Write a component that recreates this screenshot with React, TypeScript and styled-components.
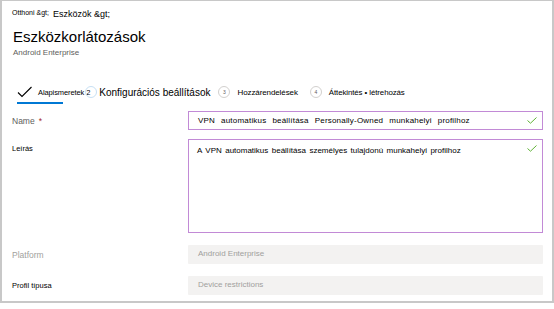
import React from 'react'
import styled, { createGlobalStyle } from 'styled-components'

const GlobalStyle = createGlobalStyle`
  body {
    margin: 0;
    background: #fff;
    font-family: "Liberation Sans", Arial, sans-serif;
    color: #000;
  }
`

const Frame = styled.div`
  box-sizing: border-box;
  width: 554px;
  height: 303px;
  border: 2px solid #c8c8c8;
  border-top-width: 1px;
  padding: 7px 0 0 10px;
`

const Breadcrumb = styled.div`
  display: flex;
  align-items: baseline;
  gap: 4px;
  height: 12px;
`

const Crumb = styled.span<{ $small?: boolean }>`
  font-size: ${(p) => (p.$small ? '7px' : '9px')};
  line-height: 1;
  position: relative;
  top: ${(p) => (p.$small ? '0' : '2px')};
`

const Title = styled.h1`
  margin: 8px 0 0 1px;
  font-size: 15px;
  font-weight: normal;
  line-height: 18px;
`

const Subtitle = styled.div`
  margin: 2px 0 0 1px;
  font-size: 8px;
  line-height: 10px;
  color: #605e5c;
`

const Stepper = styled.div`
  display: flex;
  align-items: center;
  margin: 25px 0 0 5px;
  height: 18px;
`

const Step = styled.div<{ $active?: boolean; $gap?: number }>`
  display: flex;
  align-items: center;
  height: 18px;
  position: relative;
  margin-right: ${(p) => p.$gap ?? 8}px;
  &::after {
    content: '';
    display: ${(p) => (p.$active ? 'block' : 'none')};
    position: absolute;
    left: 0;
    width: 46px;
    bottom: -3px;
    height: 2px;
    background: #0078d4;
  }
`

const StepCircle = styled.span<{ $faint?: boolean }>`
  box-sizing: border-box;
  width: 12px;
  height: 12px;
  border-radius: 50%;
  border: 1px solid ${(p) => (p.$faint ? '#c7e0f4' : '#d2d0ce')};
  font-size: 5px;
  color: #605e5c;
  display: flex;
  align-items: center;
  justify-content: center;
  margin-right: 7px;
`

const StepLabel = styled.span<{ $size?: number }>`
  font-size: ${(p) => p.$size ?? 7.5}px;
  letter-spacing: ${(p) => (p.$size === 10 ? '0' : '-0.1px')};
  white-space: nowrap;
`

const Form = styled.div`
  display: grid;
  grid-template-columns: 176px 355px;
  align-items: start;
  margin-top: 10px;
`

const Label = styled.div<{ $tone?: 'dark' | 'grey' | 'light' }>`
  font-size: ${(p) => (p.$tone === 'dark' || !p.$tone ? '7.5px' : '8.5px')};
  line-height: 10px;
  padding-top: 5px;
  color: ${(p) =>
    p.$tone === 'grey' ? '#605e5c' : p.$tone === 'light' ? '#a19f9d' : '#000'};
`

const Required = styled.span`
  color: #a4262c;
  margin-left: 4px;
`

const Field = styled.div<{ $tall?: boolean; $spacing: number; $tracking?: number }>`
  box-sizing: border-box;
  height: ${(p) => (p.$tall ? '94px' : '19px')};
  border: 1.5px solid #c28ad6;
  padding: ${(p) => (p.$tall ? '6px 0 0 8px' : '3.5px 0 0 9px')};
  font-size: 8px;
  line-height: 10px;
  word-spacing: ${(p) => p.$spacing}px;
  letter-spacing: ${(p) => p.$tracking ?? 0}px;
  position: relative;
  margin-bottom: ${(p) => (p.$tall ? '12px' : '9px')};
`

const ReadOnly = styled.div`
  box-sizing: border-box;
  height: 19px;
  background: #f3f2f1;
  border-radius: 1px;
  padding: 4px 0 0 10px;
  font-size: 8px;
  line-height: 10px;
  color: #a19f9d;
  margin-bottom: 12px;
`

const Valid = styled.svg`
  position: absolute;
  right: 5px;
  top: 5px;
`

const Tick = () => (
  <Valid width="10" height="7" viewBox="0 0 10 7">
    <path d="M0.5 3.5 L3.5 6.2 L9.5 0.5" fill="none" stroke="#5fb236" strokeWidth="1" />
  </Valid>
)

const DoneIcon = () => (
  <svg width="16" height="12" viewBox="0 0 16 12" style={{ marginRight: 5 }}>
    <path d="M1 6.5 L5 10.5 L14.5 1" fill="none" stroke="#000" strokeWidth="1.1" />
  </svg>
)

export default function App() {
  return (
    <>
      <GlobalStyle />
      <Frame>
        <Breadcrumb>
          <Crumb $small>Otthoni &amp;gt;</Crumb>
          <Crumb>Eszközök &amp;gt;</Crumb>
        </Breadcrumb>
        <Title>Eszközkorlátozások</Title>
        <Subtitle>Android Enterprise</Subtitle>

        <Stepper>
          <Step $active $gap={0}>
            <DoneIcon />
            <StepLabel>Alapismeretek 2</StepLabel>
          </Step>
          <Step>
            <StepCircle $faint style={{ marginLeft: -5, marginRight: 2 }} />
            <StepLabel $size={10}>Konfigurációs beállítások</StepLabel>
          </Step>
          <Step $gap={12}>
            <StepCircle>3</StepCircle>
            <StepLabel $size={8}>Hozzárendelések</StepLabel>
          </Step>
          <Step>
            <StepCircle>4</StepCircle>
            <StepLabel $size={7.9}>Áttekintés • létrehozás</StepLabel>
          </Step>
        </Stepper>

        <Form>
          <Label $tone="grey">
            Name<Required>*</Required>
          </Label>
          <Field $spacing={3.6} $tracking={0.2}>
            VPN automatikus beállítása Personally-Owned munkahelyi profilhoz
            <Tick />
          </Field>

          <Label>Leírás</Label>
          <Field $tall $spacing={1.2}>
            A VPN automatikus beállítása személyes tulajdonú munkahelyi profilhoz
            <Tick />
          </Field>

          <Label $tone="light">Platform</Label>
          <ReadOnly>Android Enterprise</ReadOnly>

          <Label>Profil típusa</Label>
          <ReadOnly>Device restrictions</ReadOnly>
        </Form>
      </Frame>
    </>
  )
}
